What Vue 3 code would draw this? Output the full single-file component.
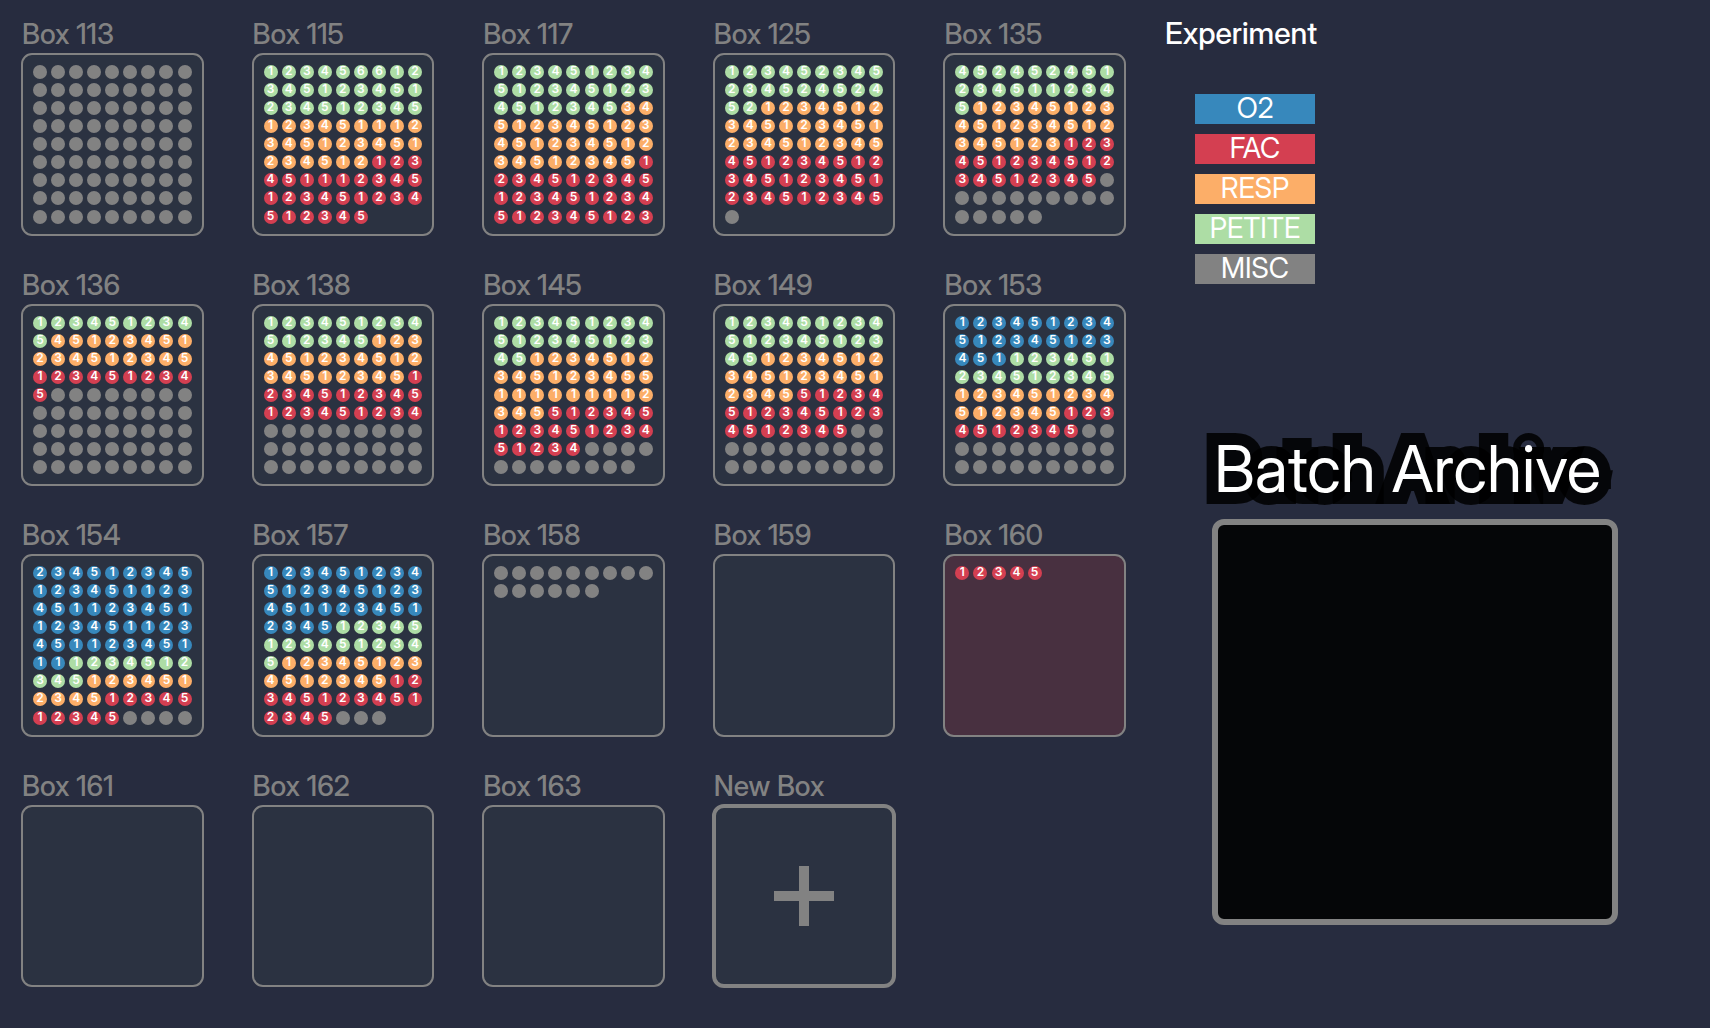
<script setup>
const legend = [
  { id: 'o2', label: 'O2' },
  { id: 'fac', label: 'FAC' },
  { id: 'resp', label: 'RESP' },
  { id: 'petite', label: 'PETITE' },
  { id: 'misc', label: 'MISC' },
]

// Each box lists runs of vials: replicate numbers per experiment, or a count for misc.
const source = [
  { name: 'Box 113', misc: 81 },
  { name: 'Box 115', petite: '123456612345123451234512345', resp: '123451112345123451234512', fac: '123451112345123451234512345' },
  { name: 'Box 117', petite: '1234512345123451234512345', resp: '3451234512345123451234512345', fac: '1234512345123451234512345123' },
  { name: 'Box 125', petite: '12345234523452452452', resp: '1234512345123451234512345', fac: '451234512345123451234512345', misc: 1 },
  { name: 'Box 135', petite: '4524524512345112345', resp: '12345123451234512345123', fac: '12345123451234512345', misc: 15 },
  { name: 'Box 136', petite: '1234512345', resp: '45123451234512345', fac: '1234512345', misc: 44 },
  { name: 'Box 138', petite: '123451234512345', resp: '12345123451234512345', fac: '1234512345123451234', misc: 27 },
  { name: 'Box 145', petite: '12345123451234512345', resp: '1234512345123455111111112345', fac: '51234512345123451234', misc: 12 },
  { name: 'Box 149', petite: '12345123451234512345', resp: '12345123451234512345', fac: '512345123451234512345', misc: 20 },
  { name: 'Box 153', o2: '123451234512345123451', petite: '123451234512345', resp: '123451234512345', fac: '1234512345', misc: 20 },
  { name: 'Box 154', o2: '23451234512345112345112345112345112345112345111', petite: '1234512345', resp: '1234512345', fac: '1234512345', misc: 4 },
  { name: 'Box 157', o2: '1234512345123451234511234512345', petite: '123451234512345', resp: '123451234512345', fac: '123451234512345', misc: 3 },
  { name: 'Box 158', misc: 15 },
  { name: 'Box 159' },
  { name: 'Box 160', fac: '12345', active: true },
  { name: 'Box 161' },
  { name: 'Box 162' },
  { name: 'Box 163' },
]

const boxes = source.map((box) => ({
  name: box.name,
  active: box.active,
  vials: ['o2', 'petite', 'resp', 'fac', 'misc'].flatMap((kind) => {
    const run = box[kind]
    if (!run) return []
    if (kind === 'misc') return Array.from({ length: run }, () => ({ kind, label: '' }))
    return [...run].map((label) => ({ kind, label }))
  }),
}))
</script>

<template>
  <div class="page">
    <main class="boxes">
      <section v-for="box in boxes" :key="box.name" class="cell">
        <h2 class="name">{{ box.name }}</h2>
        <div class="box" :class="{ active: box.active }">
          <span v-for="(vial, i) in box.vials" :key="i" class="vial" :class="vial.kind">{{ vial.label }}</span>
        </div>
      </section>
      <section class="cell">
        <h2 id="new-box" class="name">New Box</h2>
        <button class="box add" type="button" aria-labelledby="new-box">
          <svg width="60" height="60" viewBox="0 0 60 60" aria-hidden="true">
            <path d="M25 0h10v25h25v10H35v25H25V35H0V25h25z" fill="#828282" />
          </svg>
        </button>
      </section>
    </main>

    <aside class="side">
      <h2 class="heading">Experiment</h2>
      <ul class="legend">
        <li v-for="item in legend" :key="item.id" :class="item.id">{{ item.label }}</li>
      </ul>
      <section class="archive">
        <h1 class="title">
          <svg width="406" height="80"><text x="2" y="64">Batch Archive</text></svg>
        </h1>
        <div class="drop"></div>
      </section>
    </aside>
  </div>
</template>

<style>
body {
  margin: 0;
  background: #272c3f;
}
</style>

<style scoped>
.page {
  box-sizing: border-box;
  min-height: 100vh;
  padding: 0 0 26px 21px;
  display: grid;
  grid-template-columns: minmax(0, 1105fr) minmax(0, 546fr);
  column-gap: 38px;
  background: #272c3f;
  color: #fff;
  font-family: "Inter Display", Inter, "Liberation Sans", sans-serif;
}

h1,
h2 {
  margin: 0;
  white-space: nowrap;
}

.boxes {
  display: grid;
  grid-template-columns: repeat(5, minmax(0, 1fr));
  grid-template-rows: repeat(4, 1fr);
  column-gap: 48px;
}

.name {
  box-sizing: border-box;
  height: 53px;
  padding: 18px 0 0 1px;
  font-size: 28px;
  font-weight: 500;
  line-height: 32px;
  color: #828282;
}

.box {
  box-sizing: border-box;
  aspect-ratio: 1;
  padding: 10px;
  border: 2px solid #828282;
  border-radius: 11px;
  background: #2b3241;
  display: grid;
  grid-template-columns: repeat(9, 14px);
  grid-template-rows: repeat(9, 14px);
  place-content: space-between;
}

.box.active {
  background: #483040;
}

.box.add {
  width: calc(100% + 2px);
  margin: -1px;
  padding: 0;
  border-width: 4px;
  border-radius: 12px;
  display: flex;
  align-items: center;
  justify-content: center;
  cursor: pointer;
}

.vial {
  height: 14px;
  border-radius: 50%;
  font-family: Inter, "Liberation Sans", sans-serif;
  font-size: 12px;
  font-weight: 600;
  line-height: 12px;
  text-align: center;
}

.o2 { background: #3788bc; }
.fac { background: #d43f51; }
.resp { background: #fcae68; }
.petite { background: #addda5; }
.misc { background: #828282; }

.heading {
  padding: 16px 0 0 1px;
  height: 78px;
  font-size: 30px;
  font-weight: 500;
  line-height: 34px;
}

.legend {
  margin: 0 0 0 31px;
  padding: 0;
  width: 120px;
  list-style: none;
  display: grid;
  gap: 10px;
}

.legend li {
  height: 30px;
  font-size: 28px;
  line-height: 28px;
  text-align: center;
}

.archive {
  margin: 144px 0 0 48px;
}

.title {
  margin-bottom: 11px;
  height: 80px;
  font-size: 64px;
  font-weight: 400;
}

.title svg {
  display: block;
  overflow: visible;
}

.title text {
  fill: #fff;
  stroke: rgba(0, 0, 0, 0.85);
  stroke-width: 24px;
  stroke-miterlimit: 2;
  paint-order: stroke;
}

.drop {
  box-sizing: border-box;
  width: 406px;
  max-width: 100%;
  aspect-ratio: 1;
  border: 6px solid #828282;
  border-radius: 12px;
  background: #050608;
}
</style>
